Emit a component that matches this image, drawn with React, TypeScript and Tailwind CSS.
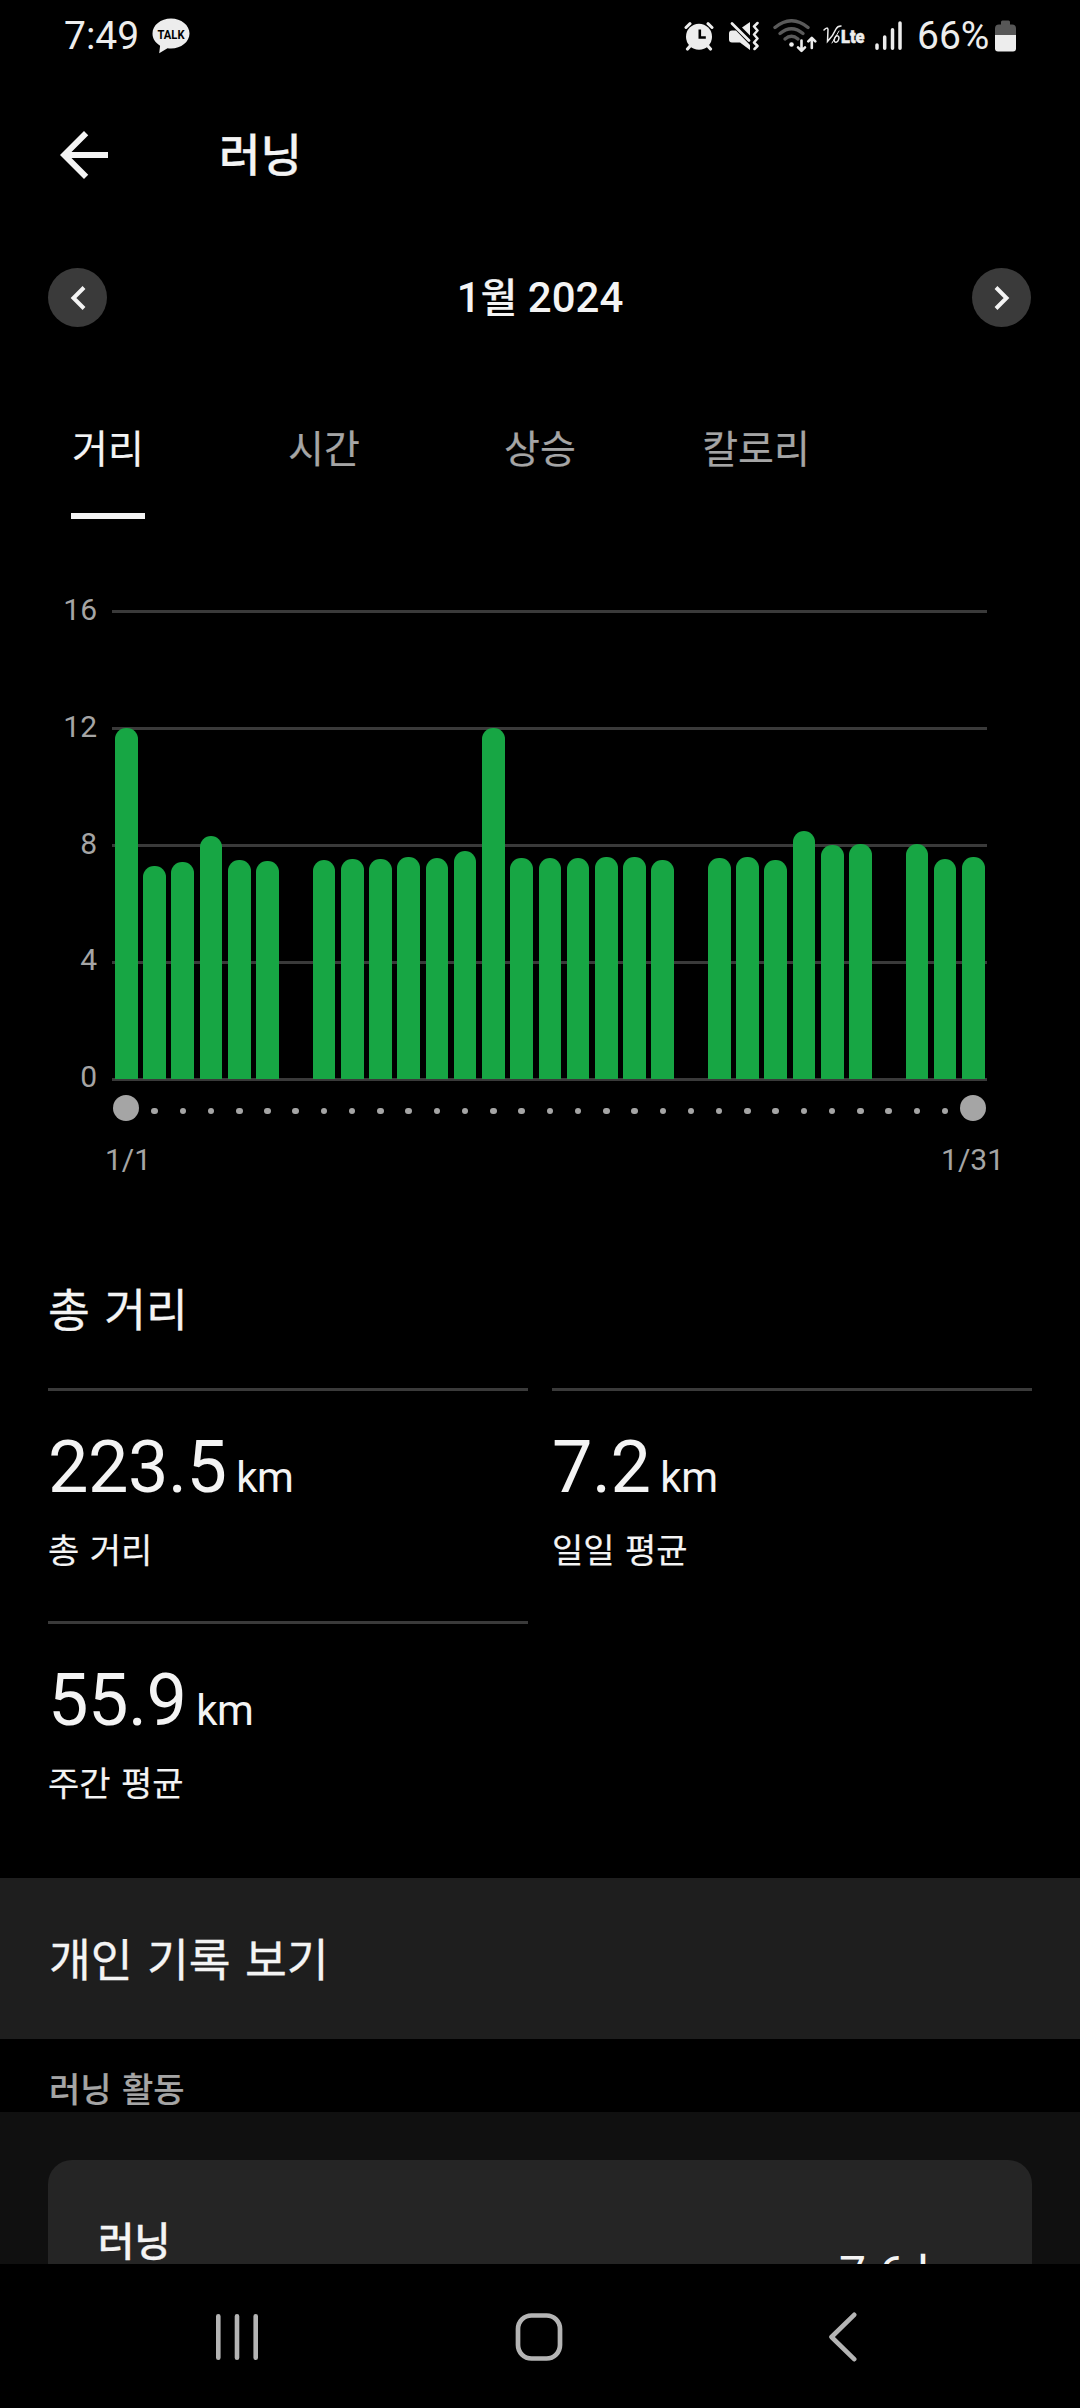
import React from 'react';
import { MdArrowBack } from 'react-icons/md';

const BAR_HEIGHTS = [
  351, 213, 217, 243, 219, 218, 0, 219, 220, 220, 222, 221, 228, 351, 221, 221,
  221, 222, 222, 219, 0, 221, 222, 219, 248, 234, 235, 0, 235, 220, 222,
];

const TABS = ['거리', '시간', '상승', '칼로리'];

function TalkIcon() {
  return (
    <svg className="block h-9 w-[38px]" viewBox="0 0 38 36">
      <path
        fill="#ededed"
        d="M19 .5C8.800.5.5 7.200.5 15.500c0 5.100 3 9.500 7.600 12.200L7.200 35.300l8.300-5c1.100.2 2.300.2 3.500.2 10.200 0 18.500-6.700 18.500-15S29.200.5 19 .5z"
      />
      <text
        x="19"
        y="20.700"
        textAnchor="middle"
        fontSize="13"
        fontWeight="700"
        fontFamily="Roboto, sans-serif"
        textLength="27"
        lengthAdjust="spacingAndGlyphs"
        fill="#000"
      >
        TALK
      </text>
    </svg>
  );
}

function AlarmIcon() {
  return (
    <svg className="block h-[30px] w-[30px]" viewBox="0 0 30 30">
      <g stroke="#ededed" strokeLinecap="round" fill="none">
        <path d="M2 6.500L6 2.700M28 6.500L24 2.700" strokeWidth="3" />
        <path d="M7 24l-3.500 4M23 24l3.500 4" strokeWidth="3.200" />
      </g>
      <circle cx="15" cy="15.800" r="13" fill="#ededed" />
      <path d="M15.800 8.500v8h6" stroke="#000" strokeWidth="2.600" fill="none" />
    </svg>
  );
}

function MuteIcon() {
  return (
    <svg className="block h-[30px] w-[30px]" viewBox="0 0 30 30">
      <path d="M0 12.500Q0 9.500 3 9.500H7L21 24V29L11 21.500H3Q0 21.500 0 18.500z" fill="#ededed" />
      <path d="M13 6.500L21 1V14.500z" fill="#ededed" />
      <path d="M3 2.500L20 19.500" stroke="#ededed" strokeWidth="2.800" strokeLinecap="round" />
      <path
        d="M28.500 2l-3.500 3.500 3.500 4-3.500 4 3.500 4-3.500 4 3.500 3.500-3 3"
        stroke="#ededed"
        strokeWidth="2.500"
        strokeLinecap="round"
        strokeLinejoin="round"
        fill="none"
      />
    </svg>
  );
}

function WifiIcon() {
  return (
    <svg className="block h-[34px] w-11" viewBox="0 0 44 34">
      <g stroke="#5a5a5a" strokeWidth="3.400" fill="none" strokeLinecap="round">
        <path d="M2 8.500Q18.500-5 35 8.500" />
        <path d="M7 14.500Q18.500 5 30 14.500" />
        <path d="M12 20Q18.500 14.500 25 20" />
      </g>
      <circle cx="18.500" cy="25.500" r="2.300" fill="#ededed" />
      <g stroke="#ededed" strokeWidth="2.600" fill="none" strokeLinecap="round" strokeLinejoin="round">
        <path d="M28.500 21.500v10M25 28.300l3.500 3.500 3.500-3.500" />
        <path d="M38.800 29V19M35.300 22.300l3.500-3.500 3.500 3.500" />
      </g>
    </svg>
  );
}

function VolteIcon() {
  return (
    <svg className="block h-[30px] w-[44px]" viewBox="0 -4 44 30">
      <g stroke="#ededed" fill="none" strokeLinecap="round">
        <path d="M1 5Q4.500 1.500 5 4.500L4.500 16.500Q10 11 13 4 14.500 1 18 1" strokeWidth="1.500" />
        <path d="M9 18L16 6" strokeWidth="1" />
        <ellipse cx="13.600" cy="14" rx="2.100" ry="3.400" strokeWidth="1.400" transform="rotate(20 13.600 14)" />
      </g>
      <text
        x="18"
        y="18"
        fontSize="18"
        fontWeight="900"
        fontFamily="Roboto, sans-serif"
        textLength="23.500"
        lengthAdjust="spacingAndGlyphs"
        fill="#ededed"
        stroke="#ededed"
        strokeWidth="0.500"
      >
        Lte
      </text>
    </svg>
  );
}

function SignalIcon() {
  return (
    <svg className="block h-[30px] w-7" viewBox="0 0 28 30">
      <g stroke="#ededed" strokeWidth="3.500" strokeLinecap="round">
        <path d="M2 24v3.200M9.700 16v11.200M17.500 8.700v18.500M25 2v25.200" />
      </g>
    </svg>
  );
}

function BatteryIcon() {
  return (
    <svg className="block h-8 w-[21px]" viewBox="0 0 21 32">
      <path d="M6 2Q6 .5 7.500.5h6Q15 .5 15 2v2.500h2q4 0 4 4V15H0V8.500q0-4 4-4h2z" fill="#575757" />
      <path d="M0 15h21v13.500q0 3-3 3H3q-3 0-3-3z" fill="#ededed" />
    </svg>
  );
}

function StatusBar() {
  return (
    <div className="flex h-[72px] shrink-0 items-center pl-16 pr-16 pb-px text-[39px] leading-[40px] text-[#ededed]">
      <span className="w-[88px]">7:49</span>
      <TalkIcon />
      <div className="ml-auto flex items-center">
        <AlarmIcon />
        <div className="ml-[15px]">
          <MuteIcon />
        </div>
        <div className="ml-[14px]">
          <WifiIcon />
        </div>
        <div className="ml-[6px]">
          <VolteIcon />
        </div>
        <div className="ml-[8px]">
          <SignalIcon />
        </div>
        <span className="ml-[14px] w-[78px]">66%</span>
        <BatteryIcon />
      </div>
    </div>
  );
}

function RoundButton({ d }: { d: string }) {
  return (
    <button className="flex h-[59px] w-[59px] items-center justify-center rounded-full bg-[#3a3a3a]">
      <svg className="block h-[59px] w-[59px]" viewBox="0 0 59 59">
        <path d={d} fill="none" stroke="#f4f4f4" strokeWidth="4" />
      </svg>
    </button>
  );
}

function Chart() {
  return (
    <div className="h-[704px] shrink-0">
      <div className="flex h-[562px] pt-[91px]">
        <div className="-mt-[19px] flex h-[505px] w-[97px] flex-col justify-between text-right text-[30px] leading-[38px] text-[#a5a5a5]">
          {[16, 12, 8, 4, 0].map((n) => (
            <span key={n}>{n}</span>
          ))}
        </div>
        <div className="relative ml-[15px] h-[469px] w-[875px]">
          <div className="flex h-[471px] flex-col justify-between">
            {[0, 1, 2, 3, 4].map((n) => (
              <div key={n} className="h-[3px] bg-[#3a3a3a]" />
            ))}
          </div>
          <div className="absolute bottom-0 left-[3px] flex w-[869.5px] items-end gap-[5.6px]">
            {BAR_HEIGHTS.map((h, i) => (
              <div key={i} className="min-w-0 flex-1 rounded-t-[11px] bg-[#17a644]" style={{ height: h }} />
            ))}
          </div>
        </div>
      </div>
      <div className="ml-[115px] flex h-[54px] w-[869.5px] items-center gap-[5.6px]">
        {BAR_HEIGHTS.map((_, i) => (
          <div key={i} className="flex min-w-0 flex-1 justify-center">
            {i === 0 || i === 30 ? (
              <div className="h-[26px] w-[26px] shrink-0 rounded-full bg-[#a5a5a5]" />
            ) : (
              <div className="mt-[6px] h-[6.500px] w-[6.500px] shrink-0 rounded-full bg-[#a5a5a5]" />
            )}
          </div>
        ))}
      </div>
      <div className="flex justify-between pl-[105px] pr-[76px] pt-[5px] text-[30px] leading-[40px] text-[#a5a5a5]">
        <span>1/1</span>
        <span>1/31</span>
      </div>
    </div>
  );
}

function Stat({ value, label }: { value: string; label: string }) {
  return (
    <div className="h-[233px] border-t-[3px] border-[#3a3a3a]">
      <div className="pt-[36px] text-[72px] leading-[82px] tracking-[-0.5px]">
        {value}
        <span className="text-[42px]"> km</span>
      </div>
      <div className="pt-[10px] text-[34px] leading-[44px] [word-spacing:2px] [-webkit-text-stroke:0.2px]">{label}</div>
    </div>
  );
}

export default function App() {
  return (
    <div className="flex h-[2408px] w-[1080px] flex-col overflow-hidden bg-black font-['Roboto','Noto_Sans_CJK_KR',sans-serif] text-[#f4f4f4]">
      <StatusBar />

      <header className="flex h-[165px] shrink-0 items-center pl-12">
        <MdArrowBack className="h-[72px] w-[72px]" />
        <h1 className="ml-[99px] pt-[5px] text-[45px] font-medium leading-[56px] [-webkit-text-stroke:0.3px]">러닝</h1>
      </header>

      <div className="flex h-[121px] shrink-0 items-center justify-between pl-12 pr-[49px]">
        <RoundButton d="M36 19.500L25.500 30 36 40.500" />
        <span className="pt-[2px] pl-px text-[42px] font-medium leading-[48px]">
          1<span className="text-[40px] [-webkit-text-stroke:0.2px]">월</span> 2024
        </span>
        <RoundButton d="M24 19.500L34.500 30 24 40.500" />
      </div>

      <nav className="grid h-[161px] shrink-0 grid-cols-5 text-[39px] leading-[48px] text-[#a5a5a5] [-webkit-text-stroke:0.2px]">
        {TABS.map((t, i) => (
          <div key={t} className="flex flex-col items-center justify-between pt-[68px]">
            <span className={i === 0 ? 'text-[#f4f4f4]' : ''}>{t}</span>
            {i === 0 && <div className="h-[6px] w-[74px] bg-[#f4f4f4]" />}
          </div>
        ))}
      </nav>

      <Chart />

      <section className="h-[655px] shrink-0 px-12">
        <h2 className="h-[165px] pt-[61px] text-[45.500px] leading-[56px] [word-spacing:3px] [-webkit-text-stroke:0.3px]">
          총 거리
        </h2>
        <div className="grid grid-cols-2 gap-x-6">
          <Stat value="223.5" label="총 거리" />
          <Stat value="7.2" label="일일 평균" />
          <Stat value="55.9" label="주간 평균" />
        </div>
      </section>

      <div className="flex h-[161px] shrink-0 items-center bg-[#1e1e1e] pl-[49px] pr-12 pt-[7px] text-[45.500px] leading-[56px] [word-spacing:3px] [-webkit-text-stroke:0.3px]">
        개인 기록 보기
      </div>

      <div className="h-[73px] shrink-0 px-[49px] pt-[30px] text-[34px] font-medium leading-[42px] text-[#a5a5a5] [word-spacing:2px] [-webkit-text-stroke:0.2px]">
        러닝 활동
      </div>

      <div className="h-[152px] shrink-0 overflow-hidden bg-[#101010] px-12 pt-12">
        <div className="flex h-[240px] justify-between rounded-[24px] bg-[#252525] pl-[50px] pr-12">
          <span className="h-10 pt-[63px] text-[39.500px] font-medium leading-[40px] [-webkit-text-stroke:0.3px]">러닝</span>
          <span className="pt-[86px] text-[48px] leading-[56px]">7.6 km</span>
        </div>
      </div>

      <footer className="flex h-[144px] shrink-0 items-center pt-[2px] pl-[216px]">
        <svg className="block h-[50px] w-[42px]" viewBox="0 0 42 50">
          <path d="M2.300 4.300v41.400M21 4.300v41.400M39.700 4.300v41.400" stroke="#b4b4b4" strokeWidth="4.600" strokeLinecap="round" />
        </svg>
        <svg className="ml-[256px] block h-[50px] w-[50px]" viewBox="0 0 50 50">
          <rect x="4" y="3.500" width="42" height="43" rx="13.500" fill="none" stroke="#b4b4b4" strokeWidth="4.700" />
        </svg>
        <svg className="ml-[264px] block h-[50px] w-[30px]" viewBox="0 0 30 50">
          <path d="M26.200 2.800L3.500 25l22.700 22.200" fill="none" stroke="#b4b4b4" strokeWidth="4.600" strokeLinecap="round" strokeLinejoin="round" />
        </svg>
      </footer>
    </div>
  );
}
